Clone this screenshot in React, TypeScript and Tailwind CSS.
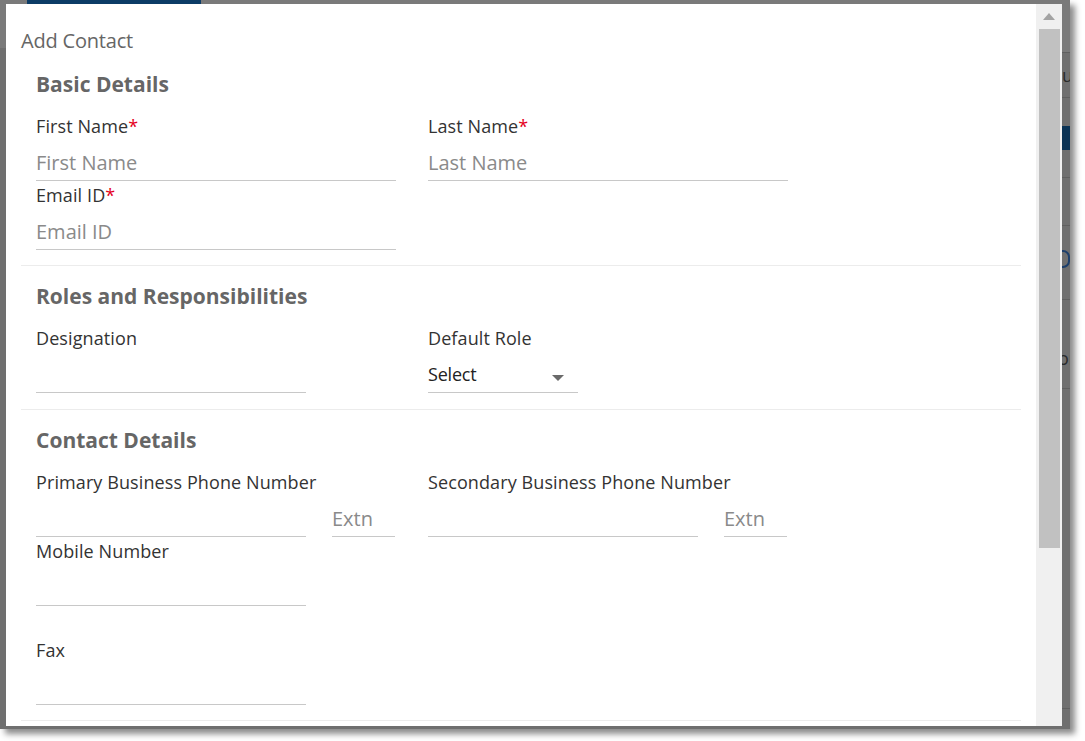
import type { ReactNode } from 'react'

const font = { fontFamily: '"Open Sans", "Noto Sans", sans-serif' }

function Label({ children, required }: { children: ReactNode; required?: boolean }) {
  return (
    <div className="h-6 whitespace-nowrap text-[18px] leading-6 tracking-[0.1px] text-[#333]">
      {children}
      {required && <span className="text-[#e4001b]">*</span>}
    </div>
  )
}

function Input({ placeholder, width }: { placeholder?: string; width: string }) {
  return (
    <div className={`mt-[6px] flex h-[37px] items-center border-b border-[#c8c8c8] pt-[2px] ${width}`}>
      <span className="text-[20px] text-[#8a8a8a]">{placeholder}</span>
    </div>
  )
}

function Field({
  label,
  required,
  placeholder,
  width = 'w-[360px]',
}: {
  label: string
  required?: boolean
  placeholder?: string
  width?: string
}) {
  return (
    <div>
      <Label required={required}>{label}</Label>
      <Input placeholder={placeholder} width={width} />
    </div>
  )
}

function PhoneField({ label }: { label: string }) {
  return (
    <div>
      <Label>{label}</Label>
      <div className="flex gap-[26px]">
        <Input width="w-[270px]" />
        <Input placeholder="Extn" width="w-[63px]" />
      </div>
    </div>
  )
}

function Heading({ children }: { children: ReactNode }) {
  return <div className="h-7 text-[21px] font-bold leading-7 text-[#666]">{children}</div>
}

function Section({ title, children, className }: { title: string; children: ReactNode; className: string }) {
  return (
    <section className={`border-b border-[#ececec] px-[15px] ${className}`}>
      <Heading>{title}</Heading>
      <div className="mt-[16px] flex flex-col gap-[2px]">{children}</div>
    </section>
  )
}

function Backdrop() {
  // bits of the page behind the dialog, seen in the strip at the right
  return (
    <div className="flex w-[8px] flex-col overflow-hidden text-[18px] leading-6 text-[#2a2a2a]">
      <div className="h-[48px] shrink-0 bg-[#7a7a7a]" />
      <div className="h-px shrink-0 bg-[#5f5f5f]" />
      <div className="h-[10px] shrink-0" />
      <div className="h-6 shrink-0">u</div>
      <div className="h-[10px] shrink-0" />
      <div className="h-px shrink-0 bg-[#5f5f5f]" />
      <div className="h-[28px] shrink-0" />
      <div className="h-[24px] shrink-0 bg-[#0b3355]" />
      <div className="h-[27px] shrink-0" />
      <div className="h-px shrink-0 bg-[#5f5f5f]" />
      <div className="h-[47px] shrink-0" />
      <div className="h-px shrink-0 bg-[#5f5f5f]" />
      <div className="h-[24px] shrink-0" />
      <div className="h-[18px] w-[14px] shrink-0 -translate-x-[6px] rounded-full border-2 border-[#1d3f6b]" />
      <div className="h-[31px] shrink-0" />
      <div className="h-px shrink-0 bg-[#5f5f5f]" />
      <div className="h-[46px] shrink-0" />
      <div className="h-6 shrink-0 -translate-x-[4px]">or</div>
      <div className="h-[18px] shrink-0" />
      <div className="h-px shrink-0 bg-[#5f5f5f]" />
      <div className="h-[319px] shrink-0" />
      <div className="h-px shrink-0 bg-[#5f5f5f]" />
    </div>
  )
}

export default function App() {
  return (
    <div className="h-[741px] w-[1085px] overflow-hidden bg-white" style={font}>
      <div className="flex h-[729px] w-[1070px] flex-col overflow-hidden bg-[#6f6f6f] shadow-[5px_5px_6px_rgba(0,0,0,0.45)]">
        <div className="flex h-[4px] shrink-0 bg-[#7a7a7a]">
          <div className="ml-[27px] w-[174px] bg-[#0c3c66]" />
        </div>

        <div className="flex">
          <div className="flex w-[6px] flex-col">
            <div className="h-[44px] bg-[#7a7a7a]" />
          </div>

          {/* dialog */}
          <div className="flex h-[722px] w-[1056px] bg-white">
            <div className="flex-1 overflow-hidden px-[15px]">
              <div className="pt-[25px] text-[20px] leading-6 tracking-[-0.2px] text-[#666]">Add Contact</div>

              <Section title="Basic Details" className="pt-[17px] pb-[15px]">
                <div className="flex gap-[32px]">
                  <Field label="First Name" required placeholder="First Name" />
                  <Field label="Last Name" required placeholder="Last Name" />
                </div>
                <Field label="Email ID" required placeholder="Email ID" />
              </Section>

              <Section title="Roles and Responsibilities" className="pt-[16px] pb-[16px]">
                <div className="flex gap-[122px]">
                  <div>
                    <Label>Designation</Label>
                    <Input width="w-[270px]" />
                  </div>
                  <div>
                    <Label>Default Role</Label>
                    <div className="mt-[6px] flex h-[37px] w-[150px] items-center justify-between border-b border-[#c8c8c8] pt-[1px]">
                      <span className="text-[18px] tracking-[-0.2px] text-[#222]">Select</span>
                      <svg width="12" height="6" viewBox="0 0 12 6" className="mr-[14px] mt-[6px]">
                        <path d="M0 0h12L6 6z" fill="#6a6a6a" />
                      </svg>
                    </div>
                  </div>
                </div>
              </Section>

              <Section title="Contact Details" className="pt-[16px] pb-[15px]">
                <div className="flex gap-[33px]">
                  <PhoneField label="Primary Business Phone Number" />
                  <PhoneField label="Secondary Business Phone Number" />
                </div>
                <Field label="Mobile Number" width="w-[270px]" />
                <div className="mt-[30px]">
                  <Field label="Fax" width="w-[270px]" />
                </div>
              </Section>
            </div>

            {/* scrollbar */}
            <div className="flex w-[26px] flex-col items-center bg-[#f0f0f0]">
              <div className="flex h-[25px] items-center justify-center">
                <svg width="12" height="7" viewBox="0 0 12 7">
                  <path d="M0 7h12L6 0z" fill="#a3a3a3" />
                </svg>
              </div>
              <div className="h-[519px] w-[21px] bg-[#c1c1c1]" />
            </div>
          </div>

          <Backdrop />
        </div>
      </div>
    </div>
  )
}
